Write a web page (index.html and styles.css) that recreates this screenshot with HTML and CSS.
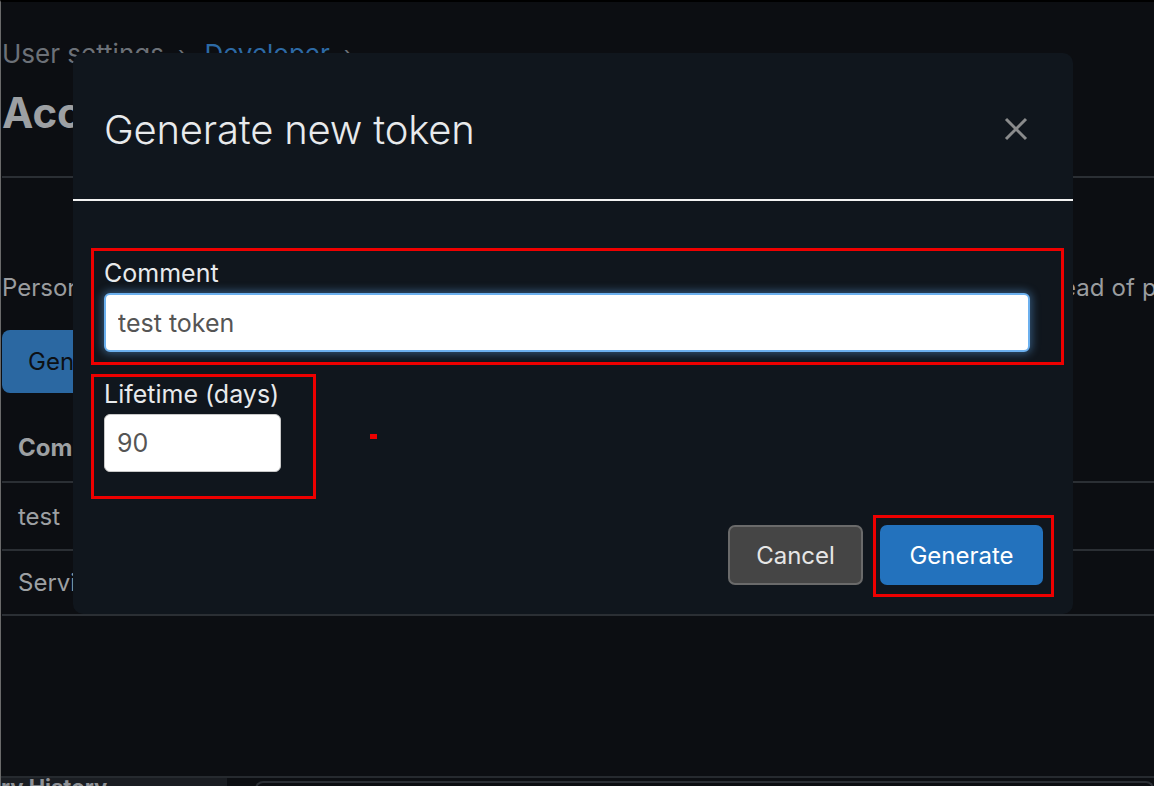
FILE: index.html
```html
<!DOCTYPE html>
<html lang="en">
<head>
  <meta charset="UTF-8" />
  <meta name="viewport" content="width=device-width, initial-scale=1.0"/>
  <title>Access tokens</title>
  <link rel="stylesheet" href="styles.css">
</head>
<body>

<div class="page">
  <div class="crumbs">
    <span>User settings</span>
    <span class="sep">›</span>
    <a href="#">Developer</a>
    <span class="sep">›</span>
  </div>
  <div class="title-bar">
    <h1>Access tokens</h1>
  </div>
  <p class="intro">Personal access tokens can be used to authenticate to the API and to the Git repositories instead of passwords.</p>
  <button class="btn-new">Generate new token</button>
  <table class="tokens">
    <tr><th>Comment</th></tr>
    <tr><td>test</td></tr>
    <tr><td>Service account</td></tr>
  </table>
</div>

<div class="dock">
  <div class="dock-tab">Query History</div>
  <div class="dock-gap"></div>
  <div class="dock-panel"></div>
</div>

<div class="modal">
  <div class="modal-head">
    <h2>Generate new token</h2>
    <button class="close" aria-label="Close">
      <svg width="24" height="24" viewBox="0 0 24 24"><path d="M2 2L22 22M22 2L2 22" stroke="#8a8b8c" stroke-width="3" fill="none"/></svg>
    </button>
  </div>
  <div class="modal-body">
    <div class="field">
      <label for="comment">Comment</label>
      <input type="text" id="comment" class="focused" value="test token">
    </div>
    <div class="field">
      <label for="lifetime">Lifetime (days)</label>
      <input type="text" id="lifetime" class="short" value="90">
    </div>
  </div>
  <div class="modal-foot">
    <button class="btn-cancel">Cancel</button>
    <button class="btn-generate">Generate</button>
  </div>
</div>

<!-- review marks -->
<div class="mark mark-comment"></div>
<div class="mark mark-lifetime"></div>
<div class="mark mark-generate"></div>
<div class="mark-dot"></div>

</body>
</html>
```

FILE: styles.css
```css
html, body { margin: 0; height: 100%; }
body { background: #0c0e12; border-top: 2px solid #000; border-left: 1px solid #6a6a6a; font-family: Inter, "Liberation Sans", sans-serif; color: #9da0a3; overflow: hidden; position: relative; box-sizing: border-box; }

.page { padding-left: 1px; overflow: hidden; }
.crumbs { margin-top: 37px; font-size: 26px; line-height: 30px; color: #6c7178; display: flex; gap: 14px; }
.crumbs a { color: #2d6aa6; text-decoration: none; margin-left: 4px; }
.crumbs .sep { font-size: 22px; }
.title-bar { border-bottom: 2px solid #2b2f34; padding-bottom: 39px; margin-top: 20px; }
.title-bar h1 { margin: 0; font-size: 42px; line-height: 48px; font-weight: 700; color: #9da0a3; }
.intro { margin: 95px 0 0; font-size: 24px; line-height: 30px; color: #9a9c9f; white-space: nowrap; word-spacing: 0.4px; }
.btn-new { margin-top: 27px; height: 63px; padding: 0 26px; font-family: inherit; font-size: 24px; background: #2b68a2; color: #0d1014; border: none; border-radius: 8px; }
.tokens { border-collapse: collapse; width: 100%; margin-top: 20px; font-size: 24px; }
.tokens th, .tokens td { text-align: left; padding: 0 16px; border-bottom: 2px solid #2b2f34; color: #9da0a3; }
.tokens th { height: 68px; font-weight: 700; }
.tokens tr:nth-child(2) td { height: 65px; padding-top: 1px; }
.tokens tr:nth-child(3) td { height: 63px; }

.dock { position: absolute; left: 0; right: 0; top: 774px; height: 12px; border-top: 2px solid #262a2f; display: flex; background: #0c0e12; }
.dock-tab { width: 226px; background: #1a1d22; color: #8e9196; font-weight: 700; font-size: 22px; line-height: 18px; overflow: hidden; white-space: nowrap; text-indent: -44px; }
.dock-gap { width: 28px; }
.dock-panel { flex: 1; border: 2px solid #2b2f35; border-bottom: none; border-radius: 8px 8px 0 0; margin-top: 3px; }

.modal { position: absolute; left: 72px; top: 51px; width: 1000px; height: 561px; background: #10161d; border-radius: 10px; display: flex; flex-direction: column; color: #e8eaec; }
.modal-head { height: 148px; display: flex; align-items: center; justify-content: space-between; padding: 6px 45px 0 31px; box-sizing: border-box; border-bottom: 2px solid #f2f2f2; }
.modal-head h2 { margin: 0; font-size: 40px; font-weight: 300; color: #e8eaec; letter-spacing: -0.2px; }
.close { background: none; border: none; padding: 0; display: flex; }

.modal-body { padding: 58px 43px 0 31px; display: flex; flex-direction: column; gap: 28px; }
.field { display: flex; flex-direction: column; align-items: flex-start; gap: 6px; }
.field label { font-size: 25px; line-height: 28px; color: #e8eaec; }
.field input { box-sizing: border-box; width: 100%; height: 59px; padding: 0 12px; font-family: inherit; font-size: 25px; color: #555; background: #fff; border: 1px solid #c8c8c8; border-radius: 6px; outline: none; }
.field input.focused { border: 2px solid #6cb0ee; box-shadow: 0 0 8px 2px rgba(90, 160, 225, 0.45); }
.field input.short { width: 177px; height: 58px; }

.modal-foot { margin-top: auto; padding: 0 30px 29px; display: flex; justify-content: flex-end; gap: 17px; }
.modal-foot button { height: 60px; font-family: inherit; font-size: 24px; border-radius: 7px; }
.btn-cancel { width: 135px; background: #454545; color: #e6e6e6; border: 2px solid #6a6a6a; }
.btn-generate { width: 163px; background: #2372bd; color: #fff; border: none; }

.mark { position: absolute; border: 3px solid #e00; box-sizing: border-box; }
.mark-comment { left: 90px; top: 246px; width: 973px; height: 117px; }
.mark-lifetime { left: 90px; top: 372px; width: 225px; height: 125px; }
.mark-generate { left: 872px; top: 513px; width: 181px; height: 82px; }
.mark-dot { position: absolute; left: 369px; top: 432px; width: 7px; height: 5px; background: #e00; }
```
